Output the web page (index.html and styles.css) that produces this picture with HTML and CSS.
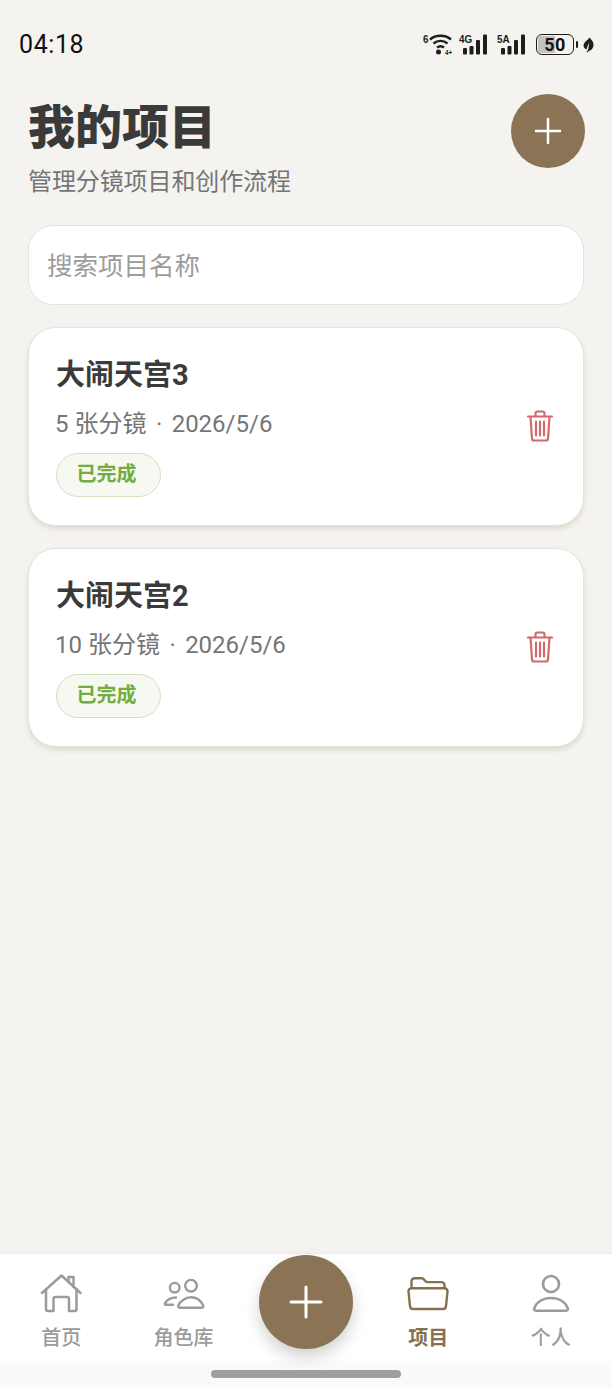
FILE: index.html
```html
<!DOCTYPE html>
<html lang="zh-CN">
<head>
<meta charset="utf-8">
<title>我的项目</title>
<link rel="stylesheet" href="styles.css">
</head>
<body>
<div class="screen">
  <div class="status">
    <span class="time">04:18</span>
    <div class="status-icons">
      <div class="sig wifi">
        <span class="tiny t6">6</span>
        <span class="tiny t4p">4+</span>
        <svg width="29" height="21" viewBox="0 0 29 21"><g fill="none" stroke="#1d1d1d" stroke-width="2.400"><path d="M7 5.500C12.500 .5 22.500 .5 28 5.500"/><path d="M10.500 9.500c4-3.500 10-3.500 14 0"/><path d="M14 13.500c2.200-1.600 4.800-1.600 7 0"/></g><circle cx="15.500" cy="18" r="2.500" fill="#1d1d1d"/></svg>
      </div>
      <div class="sig net">
        <span class="tiny">4G</span>
        <svg width="30" height="21" viewBox="0 0 30 21"><g fill="#1d1d1d"><rect x="4" y="14" width="4" height="6.500" rx="1"/><rect x="10.500" y="12" width="4" height="8.500" rx="1"/><rect x="17" y="6" width="4" height="14.500" rx="1"/><rect x="24" y="0.500" width="4" height="20" rx="1"/></g></svg>
      </div>
      <div class="sig net">
        <span class="tiny">5A</span>
        <svg width="30" height="21" viewBox="0 0 30 21"><g fill="#1d1d1d"><rect x="4" y="14" width="4" height="6.500" rx="1"/><rect x="10.500" y="12" width="4" height="8.500" rx="1"/><rect x="17" y="6" width="4" height="14.500" rx="1"/><rect x="24" y="0.500" width="4" height="20" rx="1"/></g></svg>
      </div>
      <div class="battery"><span class="batt-fill"></span><span class="batt-num">50</span></div>
      <span class="batt-cap"></span>
      <svg class="leaf" width="11" height="16" viewBox="0 0 11 15"><path d="M6.500 0C9 2.500 10.800 5 10.500 8c-.3 3-2.500 5-4.500 5.200L4.500 15l-1-.6L5 12.500C5.500 9.500 6 7 6.500 5 5.500 7 4 9.500 3.500 12 1 11 0 9 .8 6.500 1.600 4 5 2.500 6.500 0Z" fill="#1d1d1d"/></svg>
    </div>
  </div>

  <main class="content">
    <header class="page-head">
      <div>
        <h1 class="title">我的项目</h1>
        <p class="subtitle">管理分镜项目和创作流程</p>
      </div>
      <button class="add-btn" aria-label="新建">
        <svg width="28" height="28" viewBox="0 0 28 28"><path d="M14 2v24M2 14h24" stroke="#fff" stroke-width="2.500" stroke-linecap="round"/></svg>
      </button>
    </header>

    <div class="search">搜索项目名称</div>

    <section class="card">
      <div class="card-body">
        <h2 class="card-title">大闹天宫3</h2>
        <p class="meta">5 张分镜 <span class="dot">·</span> 2026/5/6</p>
        <span class="badge">已完成</span>
      </div>
      <svg class="trash" width="26" height="32" viewBox="0 0 26 32"><g fill="none" stroke="#d2696c" stroke-width="2.200" stroke-linecap="round" stroke-linejoin="round"><path d="M1 6.500h24"/><path d="M8.500 6V3.500A2 2 0 0 1 10.500 1.500h5a2 2 0 0 1 2 2V6"/><path d="M3.500 7l1.500 21.500A2 2 0 0 0 7 30.500h12a2 2 0 0 0 2-2L22.500 7"/><path d="M9 11.500v14M13 11.500v14M17 11.500v14"/></g></svg>
    </section>

    <section class="card">
      <div class="card-body">
        <h2 class="card-title">大闹天宫2</h2>
        <p class="meta">10 张分镜 <span class="dot">·</span> 2026/5/6</p>
        <span class="badge">已完成</span>
      </div>
      <svg class="trash" width="26" height="32" viewBox="0 0 26 32"><g fill="none" stroke="#d2696c" stroke-width="2.200" stroke-linecap="round" stroke-linejoin="round"><path d="M1 6.500h24"/><path d="M8.500 6V3.500A2 2 0 0 1 10.500 1.500h5a2 2 0 0 1 2 2V6"/><path d="M3.500 7l1.500 21.500A2 2 0 0 0 7 30.500h12a2 2 0 0 0 2-2L22.500 7"/><path d="M9 11.500v14M13 11.500v14M17 11.500v14"/></g></svg>
    </section>
  </main>

  <nav class="tabbar">
    <div class="tab">
      <svg width="42" height="40" viewBox="0 0 42 40"><g fill="none" stroke="#9b9b9b" stroke-width="2.500" stroke-linecap="round" stroke-linejoin="round"><path d="M2 19 21.500 1.500 40.500 19"/><path d="M6 15.500V35a2 2 0 0 0 2 2h5.500V25a2 2 0 0 1 2-2h11.500a2 2 0 0 1 2 2v12h5.500a2 2 0 0 0 2-2V15.500"/><path d="M28.500 8V3h5v10"/></g></svg>
      <span class="tab-label">首页</span>
    </div>
    <div class="tab">
      <svg width="42" height="40" viewBox="0 0 42 40"><g fill="none" stroke="#9b9b9b" stroke-width="2.400" stroke-linecap="round" stroke-linejoin="round"><circle cx="28" cy="11.700" r="5.800"/><circle cx="11.700" cy="13.700" r="4.800"/><path d="M17 33.700h21.500c1.500 0 2.200-1 1.600-2.300C38 27 33.500 23.300 28 23.300S17.500 27 15.300 31.400C14.700 32.700 15.500 33.700 17 33.700Z"/><path d="M13 23.500c-5 0-9 2.500-11 5.500-.6 1 0 1.800 1 1.800h7"/></g></svg>
      <span class="tab-label">角色库</span>
    </div>
    <div class="tab-gap"></div>
    <div class="tab active">
      <svg width="42" height="40" viewBox="0 0 42 40"><g fill="none" stroke="#86704f" stroke-width="2.400" stroke-linecap="round" stroke-linejoin="round"><path d="M4.500 12V7.300a3 3 0 0 1 3-3h7.500c1.500 0 2 1 3 2.500 .7 1 1.300 1.300 2.500 1.300h14a3 3 0 0 1 3 3V14"/><path d="M1.500 17.300a3 3 0 0 1 3-3h33a3 3 0 0 1 3 3L39 32.200a3 3 0 0 1-3 2.800H6a3 3 0 0 1-3-2.800Z"/></g></svg>
      <span class="tab-label">项目</span>
    </div>
    <div class="tab">
      <svg width="42" height="40" viewBox="0 0 42 40"><g fill="none" stroke="#9b9b9b" stroke-width="2.600" stroke-linecap="round" stroke-linejoin="round"><circle cx="21" cy="10" r="8"/><path d="M6 36.700c-1.500 0-2.300-1-1.800-2.200C6.500 28 13 24 21 24s14.500 4 16.800 10.500c.5 1.200-.3 2.200-1.800 2.200Z"/></g></svg>
      <span class="tab-label">个人</span>
    </div>
    <button class="fab" aria-label="创建">
      <svg width="34" height="34" viewBox="0 0 34 34"><path d="M17 2v30M2 17h30" stroke="#fff" stroke-width="3" stroke-linecap="round"/></svg>
    </button>
  </nav>

  <div class="home-area"><span class="home-bar"></span></div>
</div>
</body>
</html>
```
FILE: styles.css
```css
* { box-sizing: border-box; margin: 0; padding: 0; }
html, body { width: 612px; height: 1388px; overflow: hidden; }
body {
  font-family: "Noto Sans CJK SC", "Noto Sans", sans-serif;
  background: #f4f3f0;
  color: #3a3a3a;
}
.screen { height: 1388px; display: flex; flex-direction: column; }

.status {
  height: 94px;
  flex: none;
  display: flex;
  justify-content: space-between;
  align-items: flex-start;
  padding: 28px 18px 0 19px;
}
.time { font-family: Roboto, sans-serif; font-size: 25px; line-height: 33px; font-weight: 400; color: #111; letter-spacing: 0.6px; }
.status-icons { display: flex; align-items: center; height: 33px; }
.sig { position: relative; height: 21px; margin-right: 8px; }
.sig svg { display: block; }
.tiny {
  position: absolute; left: 0; top: 0;
  font-family: "Liberation Sans", sans-serif; font-size: 11px; font-weight: 700; line-height: 11px;
  color: #1d1d1d; white-space: nowrap; transform: scaleX(.9); transform-origin: left;
}
.wifi { width: 29px; margin-right: 7px; }
.t4p { left: 22px; top: 15px; font-size: 7px; line-height: 7px; }
.net { width: 30px; }
.battery {
  width: 38px; height: 21px; margin-left: 1px; border: 1.800px solid #1d1d1d; border-radius: 6px;
  position: relative; overflow: hidden; display: flex; align-items: center; justify-content: center;
  background: #f4f3f0;
}
.batt-fill { position: absolute; left: 1px; top: 1px; bottom: 1px; width: 17px; background: #c3c2c0; border-radius: 3px 0 0 3px; }
.batt-num { position: relative; font-family: Roboto, sans-serif; font-size: 18px; font-weight: 700; line-height: 18px; color: #111; letter-spacing: .3px; }
.batt-cap { width: 2px; height: 7px; background: #1d1d1d; margin: 0 5px 0 2px; border-radius: 1px; }
.leaf { display: block; }

.content { flex: 1; padding: 0 28px; }
.page-head { display: flex; justify-content: space-between; align-items: flex-start; margin-right: -1px; height: 131px; }
.title { font-size: 47px; line-height: 60px; font-weight: 900; color: #3a3a3a; }
.subtitle { font-size: 24px; line-height: 34px; color: #757575; margin-top: 9px; letter-spacing: -0.1px; }
.add-btn { width: 74px; height: 74px; border: 0; border-radius: 50%; background: #8b7355; display: flex; align-items: center; justify-content: center; }

.search {
  height: 80px; background: #fff; border: 1px solid #e4e2de; border-radius: 25px;
  padding: 0 0 4px 18px; display: flex; align-items: center;
  font-size: 25.500px; color: #9c9c9c;
}
.card {
  margin-top: 22px; height: 199px; background: #fff; border: 1px solid #e6e3de; border-radius: 28px;
  box-shadow: 0 3px 5px rgba(139, 115, 85, .2);
  display: flex; justify-content: space-between; align-items: center; padding: 0 30px 0 27px;
}
.card-body { align-self: flex-start; padding-top: 27px; display: flex; flex-direction: column; align-items: flex-start; }
.card-title { font-size: 29px; line-height: 40px; font-weight: 700; color: #3a3a3a; font-family: Roboto, "Noto Sans CJK SC", sans-serif; }
.meta { font-family: Roboto, "Noto Sans CJK SC", sans-serif; font-size: 24px; line-height: 34px; color: #757575; margin: 12px 0 0 -1px; }
.dot { margin: 0 3.500px; }
.badge {
  display: flex; align-items: center; justify-content: center;
  width: 105px; height: 44px; margin-top: 12px; padding: 0 4px 5px 0; border-radius: 22px;
  background: #f6f9f2; border: 1.500px solid #d2e2bd;
  font-size: 20px; font-weight: 700; color: #74ac3f;
}
.trash { flex: none; margin-bottom: 2px; }

.tabbar {
  flex: none; height: 108px; background: #fff; border-top: 1px solid #ececea;
  display: flex; position: relative;
}
.tab { width: 122.400px; display: flex; flex-direction: column; align-items: center; padding-top: 20px; color: #9b9b9b; }
.tab-gap { width: 122.400px; }
.tab-label { font-size: 20px; line-height: 28px; margin-top: 9px; font-weight: 500; }
.tab.active { color: #86704f; }
.tab.active .tab-label { font-weight: 700; }
.fab {
  position: absolute; left: 259px; top: 1px; width: 94px; height: 94px; border: 0; border-radius: 50%;
  background: #8b7355; display: flex; align-items: center; justify-content: center;
  box-shadow: 0 8px 16px rgba(0, 0, 0, .18);
}
.home-area { flex: none; height: 27px; background: #fafafa; display: flex; justify-content: center; padding-top: 9px; }
.home-bar { width: 190px; height: 8px; border-radius: 4px; background: #9e9e9e; }
```
